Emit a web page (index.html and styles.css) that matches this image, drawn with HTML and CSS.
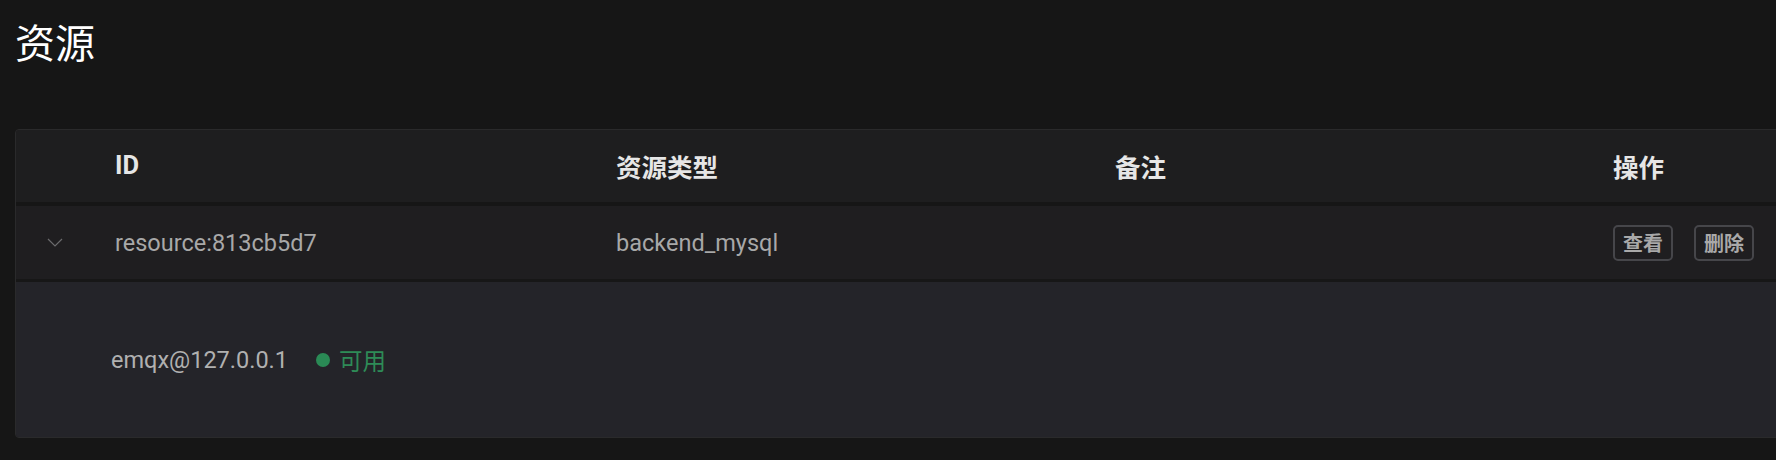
FILE: index.html
```html
<!DOCTYPE html>
<html lang="zh-CN">
<head>
<meta charset="utf-8">
<title>资源</title>
<link rel="stylesheet" href="styles.css">
</head>
<body>
<main class="page">
  <h1 class="title">资源</h1>
  <section class="card">
    <div class="row head">
      <div class="cell expand"></div>
      <div class="cell">ID</div>
      <div class="cell">资源类型</div>
      <div class="cell">备注</div>
      <div class="cell">操作</div>
    </div>
    <div class="row item">
      <div class="cell expand">
        <svg class="chevron" width="16" height="9" viewBox="0 0 16 9"><polyline points="1,1 8,8 15,1" fill="none" stroke="#6a6a6c" stroke-width="1.2"/></svg>
      </div>
      <div class="cell">resource:813cb5d7</div>
      <div class="cell">backend_mysql</div>
      <div class="cell"></div>
      <div class="cell actions">
        <button class="btn">查看</button>
        <button class="btn">删除</button>
      </div>
    </div>
    <div class="detail">
      <span class="node">emqx@127.0.0.1</span>
      <span class="status"><i class="dot"></i>可用</span>
    </div>
  </section>
</main>
</body>
</html>
```

FILE: styles.css
```css
html, body {
  margin: 0;
  padding: 0;
  background: #161616;
  overflow: hidden;
}
body {
  font-family: "Roboto", "Noto Sans CJK SC", sans-serif;
}
.page {
  padding: 13px 0 0 15px;
}
.title {
  margin: 0;
  font-family: "Noto Sans CJK SC", sans-serif;
  font-weight: 400;
  font-size: 40px;
  line-height: 56px;
  color: #ffffff;
}
.card {
  margin-top: 60px;
  margin-right: -30px;
  border: 1px solid #2a2a2b;
  border-radius: 4px;
  background: #1f1e20;
  overflow: hidden;
}
.row {
  display: grid;
  grid-template-columns: 99px 501px 499px 498px 1fr;
  align-items: center;
}
.head {
  box-sizing: border-box;
  height: 72px;
  padding-bottom: 2px;
  background: #1e1e1f;
  border-bottom: 4px solid #161616;
  box-sizing: content-box;
  font-family: "Roboto", "Noto Sans CJK SC", sans-serif;
  font-weight: 700;
  font-size: 25.5px;
  color: #e6e6e6;
}
.head {
  height: 70px;
}
.item {
  height: 73px;
  background: #1f1e20;
  border-bottom: 3px solid #171717;
  font-size: 23.5px;
  color: #a8a8a8;
}
.expand {
  padding-left: 31px;
  display: flex;
  align-items: center;
}
.chevron {
  display: block;
}
.actions {
  display: flex;
  gap: 21px;
}
.btn {
  font-family: "Noto Sans CJK SC", sans-serif;
  font-weight: 700;
  font-size: 20px;
  line-height: 22px;
  color: #a9a9a9;
  background: transparent;
  border: 2px solid #46464a;
  border-radius: 5px;
  padding: 5px 8px;
  margin: 0;
}
.detail {
  height: 155px;
  background: #242429;
  display: flex;
  align-items: center;
  padding-left: 95px;
  font-size: 23.5px;
}
.node {
  color: #b0b0b0;
}
.status {
  margin-left: 28px;
  display: flex;
  align-items: center;
  color: #2e8b57;
  font-family: "Noto Sans CJK SC", sans-serif;
}
.dot {
  width: 14px;
  height: 14px;
  border-radius: 50%;
  background: #2a8a55;
  margin-right: 9px;
}
```
